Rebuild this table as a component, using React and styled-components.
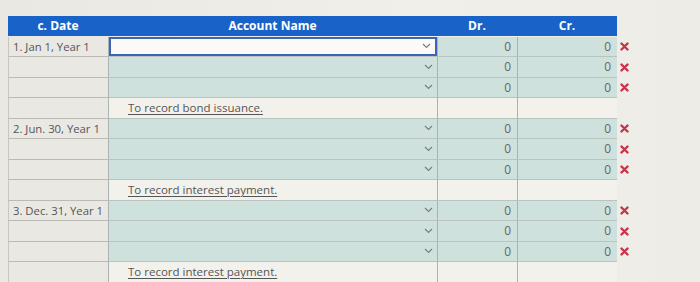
import React from "react";
import styled, { createGlobalStyle } from "styled-components";

const GlobalStyle = createGlobalStyle`
  html, body {
    margin: 0;
    padding: 0;
    background: #eeede8;
    font-family: "Open Sans", "Liberation Sans", sans-serif;
  }
`;

const Page = styled.div`
  width: 700px;
  height: 282px;
  overflow: hidden;
  padding: 16px 0 0 8px;
  box-sizing: border-box;
  background: linear-gradient(90deg, #e9e8e3 0%, #f0efea 60%, #edece7 100%);
`;

const Grid = styled.div`
  display: grid;
  grid-template-columns: 100px 329px 80px 100px 22px;
  grid-auto-rows: 20.5px;
  width: 631px;
`;

const Head = styled.div`
  background: #1963c8;
  color: #fff;
  font-weight: 700;
  font-size: 12px;
  height: 19px;
  display: flex;
  align-items: center;
  justify-content: center;
  padding-bottom: 1px;
`;

const Blank = styled.div``;

const DateCell = styled.div`
  background: #eae8e2;
  border-bottom: 1px solid #bcbab4;
  border-left: 1px solid #c8c6c0;
  box-sizing: border-box;
  font-size: 11.3px;
  color: #555;
  display: flex;
  align-items: center;
  padding-left: 4px;
  white-space: nowrap;
`;

const Cell = styled.div`
  background: ${(p) => (p.$note ? "#f3f1eb" : "#cee1dc")};
  border-bottom: 1px solid #b9c4c1;
  border-left: 1px solid #a9b3b0;
  box-sizing: border-box;
  display: flex;
  align-items: center;
  justify-content: ${(p) => (p.$num ? "flex-end" : "flex-start")};
  padding-right: ${(p) => (p.$num ? "6px" : "0")};
  font-size: 12px;
  color: #666;
`;

const Select = styled.div`
  flex: 1;
  height: 100%;
  box-sizing: border-box;
  display: flex;
  align-items: center;
  justify-content: flex-end;
  padding-right: 4px;
  background: ${(p) => (p.$focus ? "#fbfaf6" : "transparent")};
  border: ${(p) => (p.$focus ? "2px solid #3c64b8" : "none")};
  color: #777;
`;

const Note = styled.span`
  padding-left: 19px;
  font-size: 11.5px;
  color: #555;
  text-decoration: underline;
  text-underline-offset: 2px;
`;

const Remove = styled.div`
  display: flex;
  align-items: center;
  padding-left: 3px;
`;

const Chevron = () => (
  <svg width="9" height="6" viewBox="0 0 9 6">
    <path d="M1 1l3.5 3.5L8 1" fill="none" stroke="#7a7f86" strokeWidth="1.2" />
  </svg>
);

const Cross = () => (
  <svg width="9" height="9" viewBox="0 0 9 9">
    <path d="M1.5 1.5l6 6M7.5 1.5l-6 6" stroke="#c8334a" strokeWidth="2.4" strokeLinecap="round" />
  </svg>
);

const entries = [
  { date: "1. Jan 1, Year 1", note: "To record bond issuance." },
  { date: "2. Jun. 30, Year 1", note: "To record interest payment." },
  { date: "3. Dec. 31, Year 1", note: "To record interest payment." },
];

export default function App() {
  return (
    <Page>
      <GlobalStyle />
      <Grid>
        <Head>c. Date</Head>
        <Head>Account Name</Head>
        <Head>Dr.</Head>
        <Head>Cr.</Head>
        <Blank />
        {entries.map((entry, i) => (
          <React.Fragment key={entry.date}>
            {[0, 1, 2].map((line) => (
              <React.Fragment key={line}>
                <DateCell>{line === 0 ? entry.date : ""}</DateCell>
                <Cell>
                  <Select $focus={i === 0 && line === 0}>
                    <Chevron />
                  </Select>
                </Cell>
                <Cell $num>0</Cell>
                <Cell $num>0</Cell>
                <Remove>
                  <Cross />
                </Remove>
              </React.Fragment>
            ))}
            <DateCell />
            <Cell $note>
              <Note>{entry.note}</Note>
            </Cell>
            <Cell $note />
            <Cell $note />
            <Blank />
          </React.Fragment>
        ))}
      </Grid>
    </Page>
  );
}
